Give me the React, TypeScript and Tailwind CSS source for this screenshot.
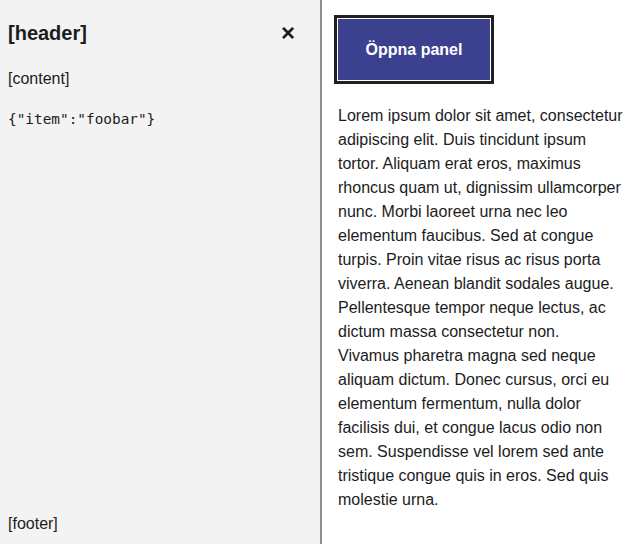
import React from 'react'

const lorem =
  'Lorem ipsum dolor sit amet, consectetur adipiscing elit. Duis tincidunt ipsum tortor. Aliquam erat eros, maximus rhoncus quam ut, dignissim ullamcorper nunc. Morbi laoreet urna nec leo elementum faucibus. Sed at congue turpis. Proin vitae risus ac risus porta viverra. Aenean blandit sodales augue. Pellentesque tempor neque lectus, ac dictum massa consectetur non. Vivamus pharetra magna sed neque aliquam dictum. Donec cursus, orci eu elementum fermentum, nulla dolor facilisis dui, et congue lacus odio non sem. Suspendisse vel lorem sed ante tristique congue quis in eros. Sed quis molestie urna.'

export default function App() {
  return (
    <div className="flex h-[544px] w-[640px] bg-white font-['Liberation_Sans',Arial,sans-serif] text-[#1c1c1c]">
      {/* Side panel */}
      <aside className="flex w-[322px] shrink-0 flex-col border-r-2 border-[#8f8f8f] bg-[#f3f3f3]">
        <div className="flex h-[66px] items-center justify-between pl-2 pr-4">
          <h2 className="text-[20px] font-bold leading-6">[header]</h2>
          <button className="flex h-8 w-8 items-center justify-center text-[24px] font-bold leading-none">
            ×
          </button>
        </div>
        <div className="flex-1 px-2">
          <p className="mt-[4px] text-[16px] leading-[18px]">[content]</p>
          <pre className="mt-[23px] font-['DejaVu_Sans_Mono',monospace] text-[14.4px] leading-[17px]">
            {'{"item":"foobar"}'}
          </pre>
        </div>
        <div className="px-2 pb-[11px] text-[16px] leading-[18px]">[footer]</div>
      </aside>

      {/* Main */}
      <main className="flex-1 pl-3 pr-4 pt-[15px]">
        <div className="inline-block border-[3px] border-[#1f2023] bg-white p-px">
          <button className="flex h-[61px] w-[152px] items-center justify-center bg-[#3c418f] text-[16px] font-bold text-white">
            Öppna panel
          </button>
        </div>
        <p className="mt-5 pl-1 text-[16px] leading-6">{lorem}</p>
      </main>
    </div>
  )
}
